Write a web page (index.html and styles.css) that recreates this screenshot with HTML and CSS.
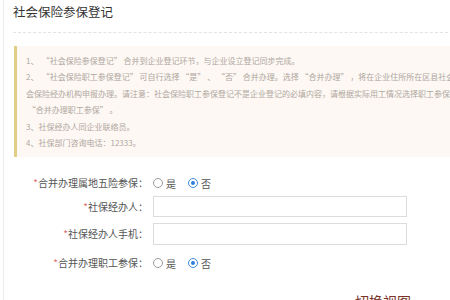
FILE: index.html
```html
<!DOCTYPE html>
<html lang="zh">
<head>
<meta charset="utf-8">
<link rel="stylesheet" href="styles.css">
</head>
<body>
<div class="page">
  <h1 class="title">社会保险参保登记</h1>
  <div class="divider"></div>
  <div class="notice">
    <div class="line"><span class="num">1、</span> “社会保险参保登记” 合并到企业登记环节，与企业设立登记同步完成。</div>
    <div class="line"><span class="num">2、</span> “社会保险职工参保登记” 可自行选择 “是” 、 “否” 合并办理。选择 “合并办理” ，将在企业住所所在区县社会保险</div>
    <div class="line">会保险经办机构申报办理。请注意：社会保险职工参保登记不是企业登记的必填内容，请根据实际用工情况选择职工参保</div>
    <div class="line">&nbsp;“合并办理职工参保” 。</div>
    <div class="line">3、社保经办人同企业联络员。</div>
    <div class="line">4、社保部门咨询电话：12333。</div>
  </div>
  <div class="form">
    <div class="row r1">
      <label class="lbl"><span class="req">*</span>合并办理属地五险参保：</label>
      <div class="radios">
        <span class="radio"></span><span class="opt">是</span>
        <span class="radio on"></span><span class="opt">否</span>
      </div>
    </div>
    <div class="row r2">
      <label class="lbl"><span class="req">*</span>社保经办人：</label>
      <input class="field" type="text">
    </div>
    <div class="row r3">
      <label class="lbl"><span class="req">*</span>社保经办人手机：</label>
      <input class="field" type="text">
    </div>
    <div class="row r4">
      <label class="lbl"><span class="req">*</span>合并办理职工参保：</label>
      <div class="radios">
        <span class="radio"></span><span class="opt">是</span>
        <span class="radio on"></span><span class="opt">否</span>
      </div>
    </div>
  </div>
  <div class="footer"><span class="switch">切换视图</span></div>
</div>
</body>
</html>
```
FILE: styles.css
```css
html, body {
  margin: 0;
  padding: 0;
  background: #fff;
  overflow: hidden;
  width: 450px;
  height: 300px;
}
body {
  font-family: "Noto Sans CJK SC", "Noto Sans", sans-serif;
  color: #555;
}
.page {
  margin-left: 3px;
  border-left: 1px solid #ececec;
  padding-left: 9px;
  height: 300px;
  box-sizing: border-box;
  width: 500px;
}
.title {
  margin: 0;
  padding-top: 3px;
  font-size: 12.5px;
  line-height: 18px;
  font-weight: normal;
  color: #333;
}
.divider {
  margin-top: 11px;
  border-top: 1px dashed #e2e2e8;
  width: 460px;
}
.notice {
  margin-top: 13px;
  margin-left: 1px;
  background: #fdf8f3;
  border-left: 3px solid #e2cf86;
  padding: 7px 0 6px 9px;
  width: 480px;
  overflow: hidden;
}
.line {
  font-size: 8px;
  line-height: 16.4px;
  color: #b0a79f;
  white-space: nowrap;
}
.num {
  display: inline-block;
  width: 14px;
}
.form {
  margin-top: 16px;
}
.row {
  display: grid;
  grid-template-columns: 135px 254px;
  column-gap: 5px;
  align-items: center;
}
.r1 { height: 20px; }
.r2 { height: 21px; margin-top: 3px; }
.r3 { height: 22px; margin-top: 6px; }
.r4 { height: 20px; margin-top: 8px; }
.lbl {
  text-align: right;
  font-size: 10px;
  line-height: 14px;
  color: #555;
  white-space: nowrap;
}
.req {
  color: #e46a6a;
}
.radios {
  display: flex;
  align-items: center;
  font-size: 10px;
  color: #555;
}
.radio {
  width: 8px;
  height: 8px;
  border: 1px solid #9a9a9a;
  border-radius: 50%;
  box-sizing: content-box;
  position: relative;
}
.radio.on {
  border-color: #3d8be0;
  margin-left: 12px;
}
.radio.on::after {
  content: "";
  position: absolute;
  left: 2px;
  top: 2px;
  width: 4px;
  height: 4px;
  border-radius: 50%;
  background: #2f7fd8;
}
.opt {
  margin-left: 3px;
}
.field {
  height: 21px;
  box-sizing: border-box;
  border: 1px solid #dcdcdc;
  margin: 0;
  padding: 0 4px;
  width: 254px;
  background: #fff;
}
.r3 .field { height: 22px; }
.footer {
  margin-top: 15px;
  padding-left: 342px;
}
.switch {
  font-size: 14px;
  line-height: 16px;
  color: #7a3528;
  white-space: nowrap;
}
```
